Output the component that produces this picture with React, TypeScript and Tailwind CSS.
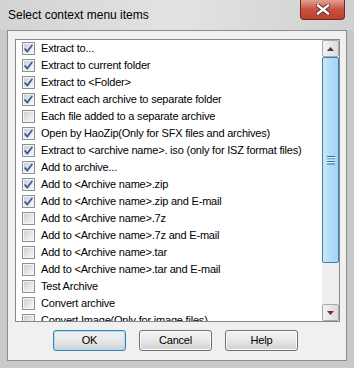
import React from 'react';

const items: { label: string; checked: boolean }[] = [
  { label: 'Extract to...', checked: true },
  { label: 'Extract to current folder', checked: true },
  { label: 'Extract to <Folder>', checked: true },
  { label: 'Extract each archive to separate folder', checked: true },
  { label: 'Each file added to a separate archive', checked: false },
  { label: 'Open by HaoZip(Only for SFX files and archives)', checked: true },
  { label: 'Extract to <archive name>. iso (only for ISZ format files)', checked: true },
  { label: 'Add to archive...', checked: true },
  { label: 'Add to <Archive name>.zip', checked: true },
  { label: 'Add to <Archive name>.zip and E-mail', checked: true },
  { label: 'Add to <Archive name>.7z', checked: false },
  { label: 'Add to <Archive name>.7z and E-mail', checked: false },
  { label: 'Add to <Archive name>.tar', checked: false },
  { label: 'Add to <Archive name>.tar and E-mail', checked: false },
  { label: 'Test Archive', checked: false },
  { label: 'Convert archive', checked: false },
  { label: 'Convert Image(Only for image files)', checked: false },
];

function CheckBox({ checked }: { checked: boolean }) {
  return (
    <svg width="13" height="13" viewBox="0 0 13 13" className="shrink-0">
      <defs>
        <linearGradient id="cbg" x1="0" y1="0" x2="1" y2="1">
          <stop offset="0" stopColor="#cbcfd5" />
          <stop offset="1" stopColor="#f7f7f7" />
        </linearGradient>
      </defs>
      <rect x="0.5" y="0.5" width="12" height="12" fill="#f4f4f4" stroke="#8e8f8f" />
      <rect x="2" y="2" width="9" height="9" fill="url(#cbg)" />
      {checked && (
        <path
          d="M3 6.2 L5.2 8.6 L10 2.6 L10.4 3.6 L5.4 10.4 L2.6 7.4 Z"
          fill="#3b5aa3"
          stroke="#2a4286"
          strokeWidth="0.6"
          strokeLinejoin="round"
        />
      )}
    </svg>
  );
}

function ScrollArrow({ up }: { up: boolean }) {
  return (
    <div className="h-[17px] w-[17px] rounded-[2px] border border-[#a8a8a8] bg-linear-to-r from-[#f3f3f3] to-[#dcdcdc] flex items-center justify-center">
      <svg width="7" height="4" viewBox="0 0 7 4">
        {up ? (
          <path d="M0 4 L3.5 0 L7 4 Z" fill="#404040" />
        ) : (
          <path d="M0 0 L7 0 L3.5 4 Z" fill="#7a2e2e" />
        )}
      </svg>
    </div>
  );
}

function DlgButton({ label, primary }: { label: string; primary?: boolean }) {
  return (
    <button
      className={`h-[21px] w-[73px] rounded-[3px] border text-[11px] tracking-[-0.2px] text-black bg-linear-to-b from-[#f2f2f2] via-[#e8e8e8] to-[#cfcfcf] ${
        primary
          ? 'border-[#3c7fb1] shadow-[inset_0_0_0_1px_#a6e3f8]'
          : 'border-[#707070] shadow-[inset_0_0_0_1px_#fbfbfb]'
      }`}
    >
      {label}
    </button>
  );
}

export default function App() {
  return (
    <div
      className="w-[354px] h-[368px] bg-[#c9c9c9] flex flex-col overflow-hidden"
      style={{ fontFamily: '"Liberation Sans", Arial, sans-serif' }}
    >
      {/* title bar */}
      <div className="h-[30px] flex items-start justify-between bg-linear-to-r from-[#d3d3d3] via-[#e3e3e3] to-[#d0d0d0]">
        <div className="h-[30px] pl-[8px] flex items-center text-[12px] text-black">
          Select context menu items
        </div>
        <div className="mr-[9px] h-[20px] w-[45px] rounded-b-[4px] border border-t-0 border-[#6e2a22] bg-linear-to-b from-[#e0a093] via-[#c9503d] to-[#b8402c] flex items-center justify-center">
          <svg width="14" height="11" viewBox="0 0 14 11">
            <path d="M2 1.5 L12 9.5 M12 1.5 L2 9.5" stroke="#4a1d17" strokeWidth="4" strokeLinecap="square" />
            <path d="M2 1.5 L12 9.5 M12 1.5 L2 9.5" stroke="#ffffff" strokeWidth="2.4" strokeLinecap="square" />
          </svg>
        </div>
      </div>

      {/* client area */}
      <div className="ml-[7px] w-[340px] h-[331px] border border-[#8c8c8c] bg-[#f0f0f0] pt-[8px] pl-[7px] pr-[6px] flex flex-col">
        <div className="h-[283px] w-[325px] border border-[#828790] bg-white flex overflow-hidden">
          <div className="flex-1 overflow-hidden">
            {items.map((it) => (
              <div key={it.label} className="h-[17px] flex items-center pl-[6px] gap-[6px]">
                <CheckBox checked={it.checked} />
                <span className="text-[11px] tracking-[-0.2px] text-black whitespace-nowrap leading-none">
                  {it.label}
                </span>
              </div>
            ))}
          </div>
          {/* scrollbar */}
          <div className="w-[17px] bg-[#eeeeee] flex flex-col">
            <ScrollArrow up />
            <div className="flex-1 flex flex-col">
              <div className="h-[206px] mx-[0px] rounded-[2px] border border-[#3c7fb1] bg-linear-to-r from-[#cbe8f8] via-[#b2dcf5] to-[#a4d3f2] flex items-center justify-center">
                <svg width="8" height="9" viewBox="0 0 8 9">
                  <rect x="0" y="0" width="8" height="1" fill="#3c6d95" />
                  <rect x="0" y="2.5" width="8" height="1" fill="#3c6d95" />
                  <rect x="0" y="5" width="8" height="1" fill="#3c6d95" />
                  <rect x="0" y="7.5" width="8" height="1" fill="#3c6d95" />
                  <rect x="0" y="1" width="8" height="1" fill="#e6f4fc" />
                  <rect x="0" y="3.5" width="8" height="1" fill="#e6f4fc" />
                  <rect x="0" y="6" width="8" height="1" fill="#e6f4fc" />
                </svg>
              </div>
            </div>
            <ScrollArrow up={false} />
          </div>
        </div>

        <div className="mt-[8px] pl-[38px] flex gap-[13px]">
          <DlgButton label="OK" primary />
          <DlgButton label="Cancel" />
          <DlgButton label="Help" />
        </div>
      </div>
    </div>
  );
}
